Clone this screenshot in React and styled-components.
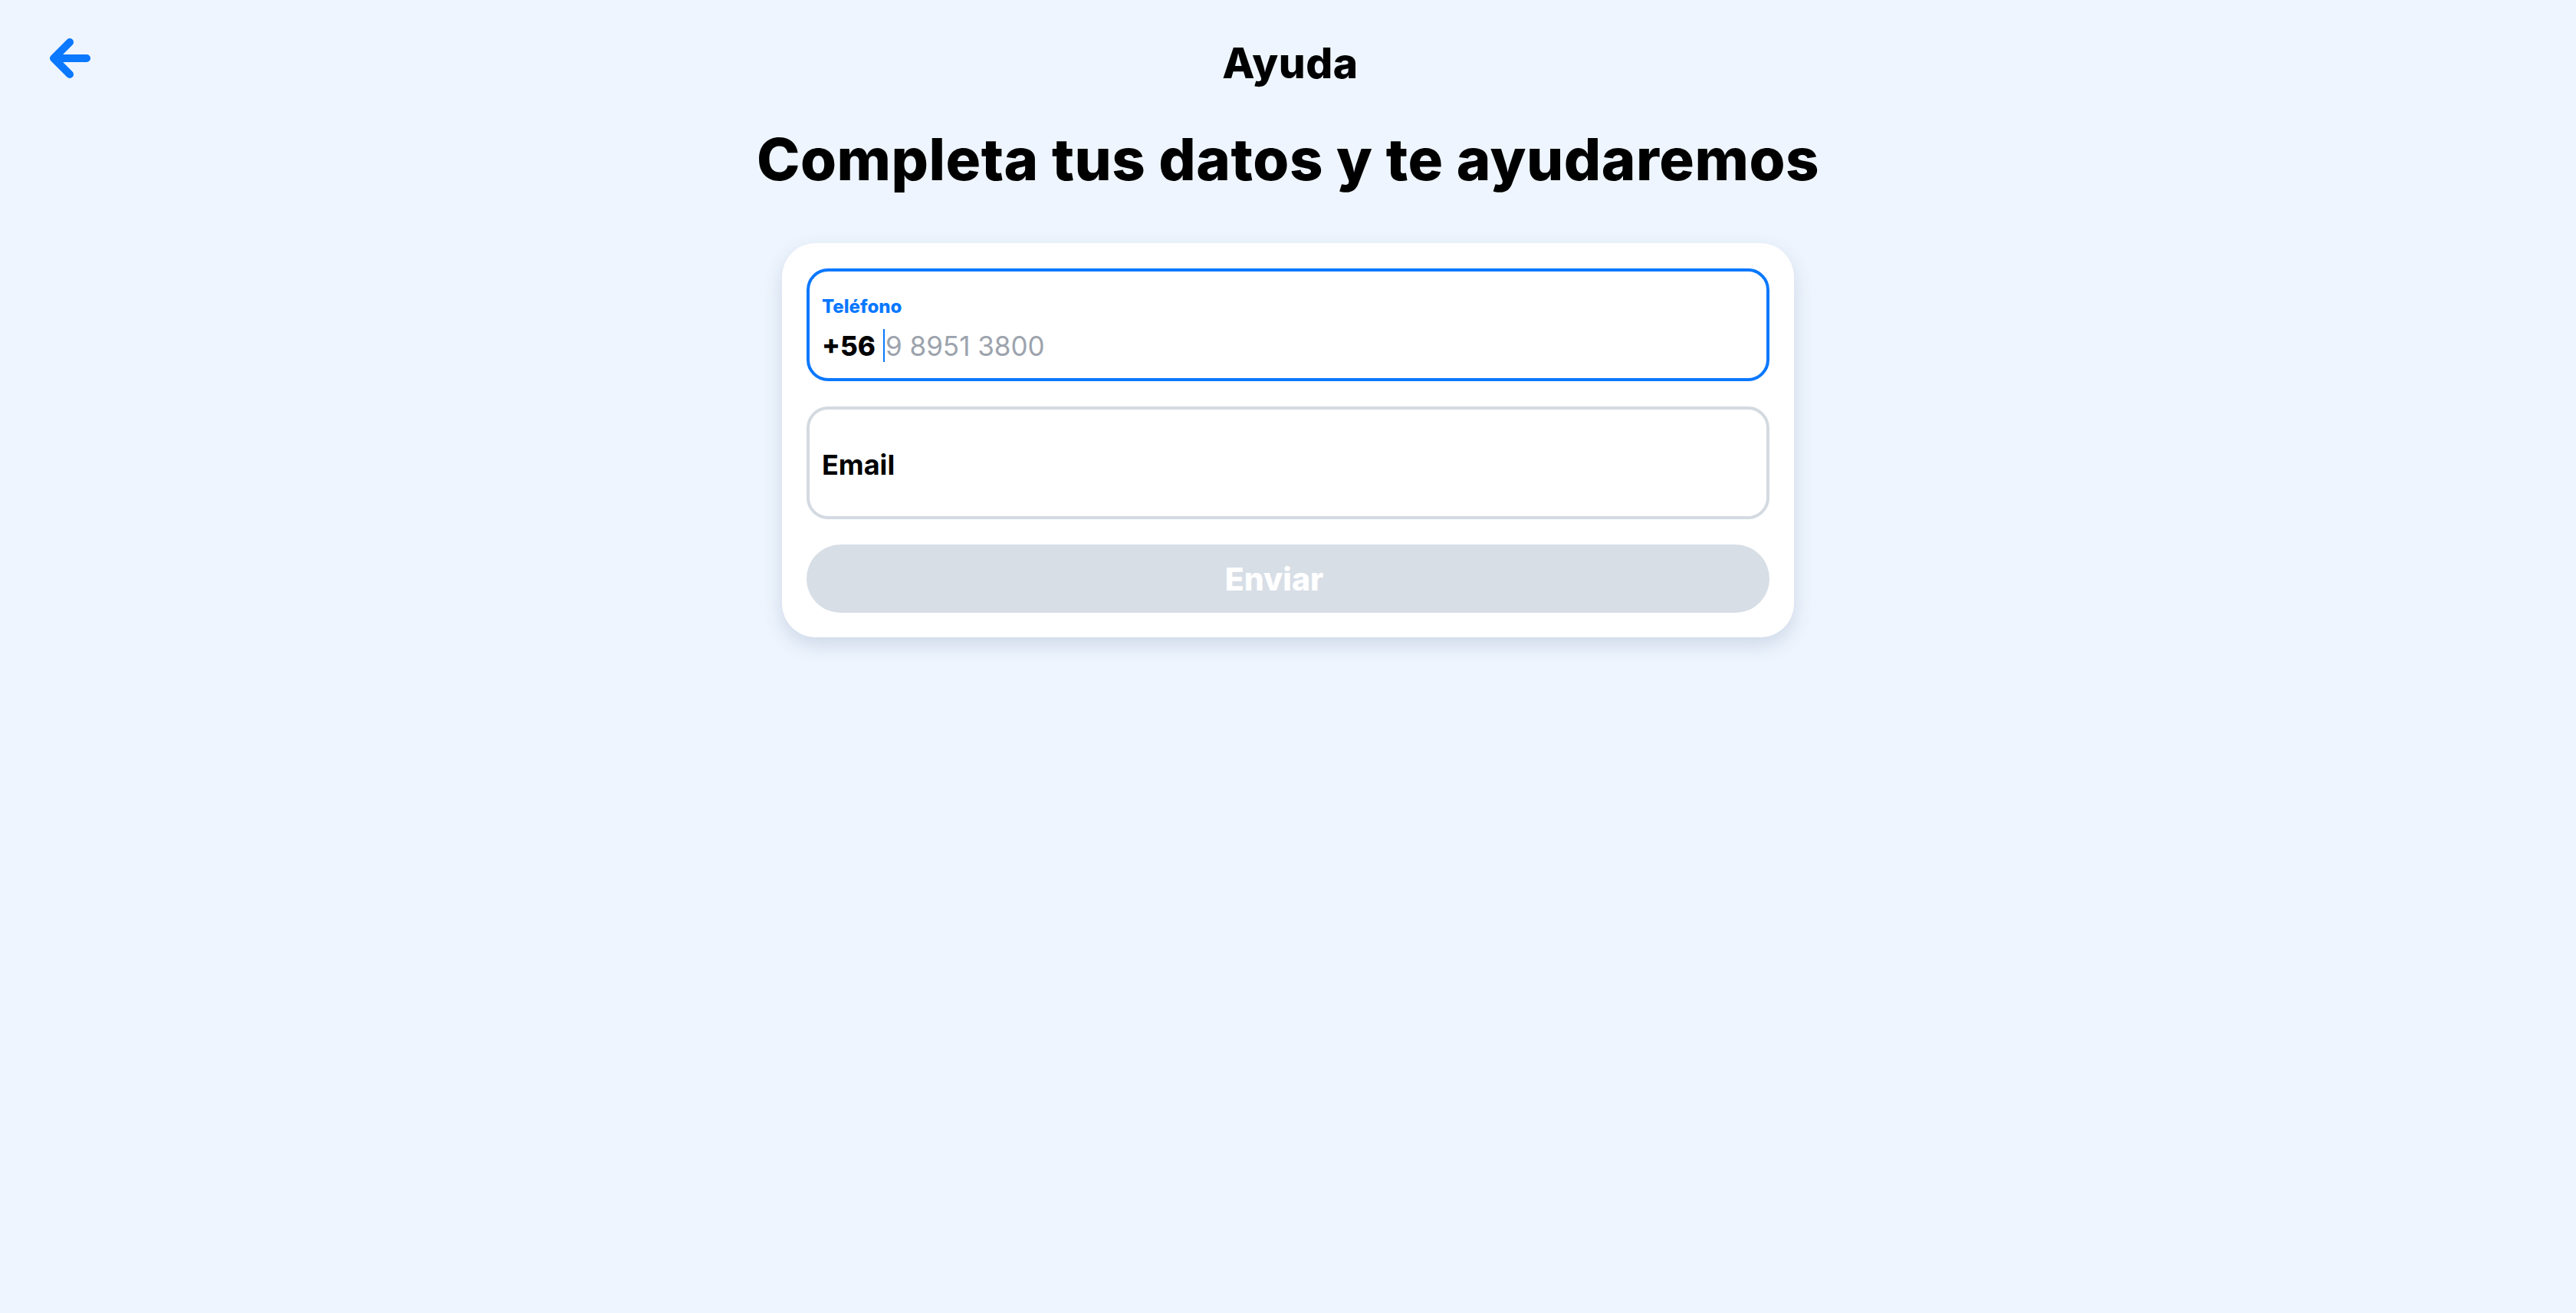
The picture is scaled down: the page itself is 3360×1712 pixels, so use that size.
import React from 'react';
import styled, { createGlobalStyle } from 'styled-components';

const GlobalStyle = createGlobalStyle`
  html, body {
    margin: 0;
    padding: 0;
    background: #eef5fe;
  }
  body {
    font-family: Inter, "Noto Sans", sans-serif;
    color: #000;
    min-height: 1712px;
  }
`;

const Page = styled.div`
  display: flex;
  flex-direction: column;
  align-items: center;
`;

const Header = styled.header`
  width: 100%;
  box-sizing: border-box;
  display: grid;
  grid-template-columns: 1fr auto 1fr;
  align-items: center;
  height: 152px;
  padding: 0 60px;
`;

const BackButton = styled.button`
  justify-self: start;
  width: 60px;
  height: 60px;
  padding: 0;
  border: none;
  background: transparent;
  cursor: pointer;
  display: flex;
  align-items: center;
  justify-content: center;
`;

const Title = styled.h1`
  margin: 12px 0 0 6px;
  font-size: 55px;
  font-weight: 800;
  line-height: 1.2;
  letter-spacing: 0.5px;
`;

const Heading = styled.h2`
  margin: 10px 0 0;
  font-size: 76px;
  font-weight: 800;
  line-height: 1.2;
  letter-spacing: 0.5px;
  text-align: center;
`;

const Card = styled.form`
  margin-top: 64px;
  width: 1320px;
  box-sizing: border-box;
  padding: 33px 32px 32px;
  background: #fff;
  border-radius: 44px;
  box-shadow: 0 10px 26px rgba(40, 70, 110, 0.16);
  display: flex;
  flex-direction: column;
  gap: 33px;
`;

const Field = styled.label`
  box-sizing: border-box;
  height: 147px;
  border: 4px solid ${p => (p.$active ? '#0a78ff' : '#d4dae1')};
  border-radius: 28px;
  padding: ${p => (p.$active ? '32px 16px 0' : '6px 16px 0')};
  display: flex;
  flex-direction: column;
  justify-content: ${p => (p.$active ? 'flex-start' : 'center')};
  gap: 15px;
`;

const FieldLabel = styled.span`
  font-size: ${p => (p.$small ? '24px' : '36px')};
  font-weight: ${p => (p.$small ? 800 : 700)};
  line-height: ${p => (p.$small ? '28px' : '43px')};
  color: ${p => (p.$small ? '#0a78ff' : '#000')};
`;

const ValueRow = styled.div`
  display: flex;
  align-items: center;
  font-size: 35px;
  line-height: 42px;
`;

const Prefix = styled.span`
  font-weight: 800;
  margin-right: 10px;
`;

const Caret = styled.span`
  width: 2px;
  height: 43px;
  background: #0a78ff;
  margin-right: 1px;
`;

const Placeholder = styled.span`
  color: #9ca3ad;
  font-weight: 400;
`;

const SubmitButton = styled.button`
  height: 89px;
  border: none;
  border-radius: 45px;
  background: #d7dee6;
  color: #fff;
  font-family: inherit;
  font-size: 41px;
  font-weight: 800;
  padding: 0 36px 0 0;
  cursor: default;
`;

const BackArrow = () => (
  <svg width="60" height="60" viewBox="0 0 60 60" fill="none">
    <path
      d="M31 9 L10 30 L31 51 M10 30 H53"
      stroke="#0a78ff"
      strokeWidth="10"
      strokeLinecap="round"
      strokeLinejoin="round"
    />
  </svg>
);

export default function App() {
  return (
    <>
      <GlobalStyle />
      <Page>
        <Header>
          <BackButton type="button" aria-label="Volver">
            <BackArrow />
          </BackButton>
          <Title>Ayuda</Title>
          <span />
        </Header>
        <Heading>Completa tus datos y te ayudaremos</Heading>
        <Card onSubmit={e => e.preventDefault()}>
          <Field $active>
            <FieldLabel $small>Teléfono</FieldLabel>
            <ValueRow>
              <Prefix>+56</Prefix>
              <Caret />
              <Placeholder>9 8951 3800</Placeholder>
            </ValueRow>
          </Field>
          <Field>
            <FieldLabel>Email</FieldLabel>
          </Field>
          <SubmitButton type="submit" disabled>
            Enviar
          </SubmitButton>
        </Card>
      </Page>
    </>
  );
}
